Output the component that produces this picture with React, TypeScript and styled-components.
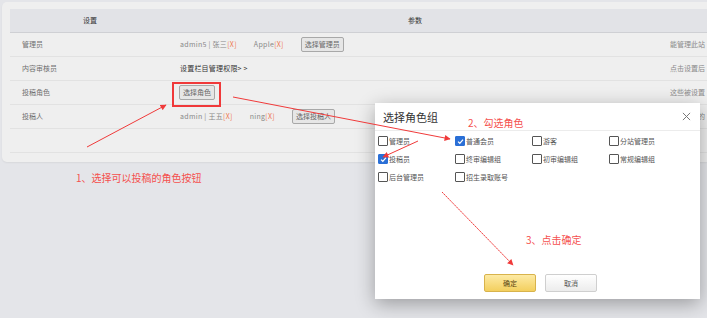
import React from 'react';
import styled, { createGlobalStyle } from 'styled-components';

const GlobalStyle = createGlobalStyle`
  html, body {
    margin: 0;
    padding: 0;
    background: #e4e5e9;
    overflow: hidden;
  }
  body {
    font-family: 'Noto Sans CJK SC', 'Noto Sans', sans-serif;
  }
`;

const Page = styled.div`
  position: relative;
  width: 707px;
  height: 318px;
  padding: 2px 0 0 2px;
  box-sizing: border-box;
  overflow: hidden;
`;

const Panel = styled.div`
  background: #efefef;
  border-radius: 5px 0 0 5px;
  padding: 7px 0 9px 8px;
  box-shadow: 0 1px 2px rgba(0, 0, 0, 0.06);
`;

const Table = styled.div`
  display: grid;
  grid-template-columns: 160px 490px 1fr;
  font-size: 7px;
  line-height: 1;
  white-space: nowrap;
`;

const HeadCell = styled.div`
  height: 24px;
  display: flex;
  align-items: center;
  justify-content: center;
  background: #e2e3e7;
  border-bottom: 1px solid #cfd0d4;
  color: #333;
  box-sizing: border-box;
`;

const Cell = styled.div<{ $tone?: 'label' | 'note' }>`
  height: 24px;
  display: flex;
  align-items: center;
  gap: 17px;
  padding-left: ${p => (p.$tone === 'label' ? '12px' : '10px')};
  border-bottom: 1px solid #e2e2e2;
  box-sizing: border-box;
  color: ${p => (p.$tone === 'label' ? '#6f6f6f' : p.$tone === 'note' ? '#8a8a8a' : '#888')};
  overflow: hidden;
`;

const Name = styled.span`
  color: #888;
  letter-spacing: 0.3px;
`;

const Remove = styled.span`
  color: #ee7a55;
`;

const LinkText = styled.span`
  color: #333;
  letter-spacing: 0.2px;
`;

const SmallButton = styled.span`
  display: inline-flex;
  align-items: center;
  height: 13px;
  padding: 0 3px;
  border: 1px solid #a8a8a8;
  border-radius: 2px;
  background: #e6e6e6;
  color: #666;
`;

const Dialog = styled.div`
  position: absolute;
  left: 375px;
  top: 103px;
  width: 325px;
  height: 196px;
  background: #fff;
  box-shadow: 0 5px 18px rgba(0, 0, 0, 0.32);
  display: flex;
  flex-direction: column;
`;

const DialogHead = styled.div`
  height: 27px;
  display: flex;
  align-items: center;
  justify-content: space-between;
  padding: 0 9px 0 8px;
  border-bottom: 1px solid #ececec;
  font-size: 11px;
  color: #333;
`;

const RoleGrid = styled.div`
  display: grid;
  grid-template-columns: repeat(4, 77px);
  grid-auto-rows: 18px;
  padding: 1px 0 0 3px;
  font-size: 7px;
  color: #555;
`;

const Role = styled.label`
  display: flex;
  align-items: center;
  white-space: nowrap;
`;

const Box = styled.span<{ $checked?: boolean }>`
  width: 8px;
  height: 8px;
  border: 1px solid ${p => (p.$checked ? '#2a6fd6' : '#555')};
  border-radius: 1px;
  background: ${p => (p.$checked ? '#2a6fd6' : '#fff')};
  display: inline-flex;
  align-items: center;
  justify-content: center;
  margin-right: 1px;
`;

const Footer = styled.div`
  margin-top: auto;
  display: flex;
  justify-content: center;
  gap: 9px;
  padding: 0 0 7px 6px;
`;

const DialogButton = styled.span<{ $primary?: boolean }>`
  width: 52px;
  height: 18px;
  box-sizing: border-box;
  display: flex;
  align-items: center;
  justify-content: center;
  font-size: 7px;
  border-radius: 2px;
  border: 1px solid ${p => (p.$primary ? '#d8b34c' : '#cfcfcf')};
  background: ${p =>
    p.$primary
      ? 'linear-gradient(#fdeaa4, #f3cf5e)'
      : 'linear-gradient(#ffffff, #ececec)'};
  color: ${p => (p.$primary ? '#5a4410' : '#555')};
`;

const Highlight = styled.div`
  position: absolute;
  left: 172px;
  top: 82px;
  width: 49px;
  height: 25px;
  box-sizing: border-box;
  border: 2px solid #f0393a;
`;

const Note = styled.div<{ $x: number; $y: number }>`
  position: absolute;
  left: ${p => p.$x}px;
  top: ${p => p.$y}px;
  font-size: 10px;
  line-height: 12px;
  color: #f5504e;
  white-space: nowrap;
`;

const Arrows = styled.svg`
  position: absolute;
  left: 0;
  top: 0;
  pointer-events: none;
`;

const rows = [
  {
    label: '管理员',
    content: (
      <>
        <Name>admin5 | 张三<Remove>[X]</Remove></Name>
        <Name>Apple<Remove>[X]</Remove></Name>
        <SmallButton>选择管理员</SmallButton>
      </>
    ),
    note: '能管理此站',
  },
  {
    label: '内容审核员',
    content: <LinkText>设置栏目管理权限&gt; &gt;</LinkText>,
    note: '点击设置后',
  },
  {
    label: '投稿角色',
    content: <SmallButton style={{ marginLeft: -1 }}>选择角色</SmallButton>,
    note: '这些被设置',
  },
  {
    label: '投稿人',
    content: (
      <>
        <Name>admin | 王五<Remove>[X]</Remove></Name>
        <Name>ning<Remove>[X]</Remove></Name>
        <SmallButton>选择投稿人</SmallButton>
      </>
    ),
    note: '指定用户的',
  },
  { label: '', content: null, note: '' },
];

const roles = [
  { name: '管理员' },
  { name: '普通会员', checked: true },
  { name: '游客' },
  { name: '分站管理员' },
  { name: '投稿员', checked: true },
  { name: '终审编辑组' },
  { name: '初审编辑组' },
  { name: '常规编辑组' },
  { name: '后台管理员' },
  { name: '招生录取账号' },
];

const Check = () => (
  <svg width="7" height="7" viewBox="0 0 10 10">
    <path d="M1.5 5.2 L4 7.6 L8.6 2.4" fill="none" stroke="#fff" strokeWidth="1.8" />
  </svg>
);

const App = () => {
  return (
    <Page>
      <GlobalStyle />
      <Panel>
        <Table>
          <HeadCell>设置</HeadCell>
          <HeadCell>参数</HeadCell>
          <HeadCell />
          {rows.map((r, i) => (
            <React.Fragment key={i}>
              <Cell $tone="label">{r.label}</Cell>
              <Cell>{r.content}</Cell>
              <Cell $tone="note">{r.note}</Cell>
            </React.Fragment>
          ))}
        </Table>
      </Panel>

      <Highlight />

      <Dialog>
        <DialogHead>
          <span>选择角色组</span>
          <svg width="9" height="9" viewBox="0 0 10 10">
            <path d="M1 1 L9 9 M9 1 L1 9" stroke="#777" strokeWidth="1.1" />
          </svg>
        </DialogHead>
        <RoleGrid>
          {roles.map(r => (
            <Role key={r.name}>
              <Box $checked={r.checked}>{r.checked && <Check />}</Box>
              {r.name}
            </Role>
          ))}
        </RoleGrid>
        <Footer>
          <DialogButton $primary>确定</DialogButton>
          <DialogButton>取消</DialogButton>
        </Footer>
      </Dialog>

      <Note $x={76} $y={172}>1、选择可以投稿的角色按钮</Note>
      <Note $x={468} $y={117}>2、勾选角色</Note>
      <Note $x={526} $y={234}>3、点击确定</Note>

      <Arrows width="707" height="318" viewBox="0 0 707 318">
        <defs>
          <marker id="head" viewBox="0 0 10 10" refX="9" refY="5" markerWidth="7" markerHeight="6" orient="auto">
            <path d="M0 0 L10 5 L0 10 z" fill="#f03a3a" />
          </marker>
        </defs>
        <g stroke="#f03a3a" strokeWidth="1" fill="none">
          <line x1="87" y1="147" x2="166" y2="105" markerEnd="url(#head)" />
          <line x1="233" y1="97" x2="450" y2="139" markerEnd="url(#head)" />
          <line x1="418" y1="141" x2="383" y2="157" markerEnd="url(#head)" />
          <line x1="442" y1="192" x2="513" y2="265" strokeDasharray="2 0.6" markerEnd="url(#head)" />
        </g>
      </Arrows>
    </Page>
  );
};

export default App;
